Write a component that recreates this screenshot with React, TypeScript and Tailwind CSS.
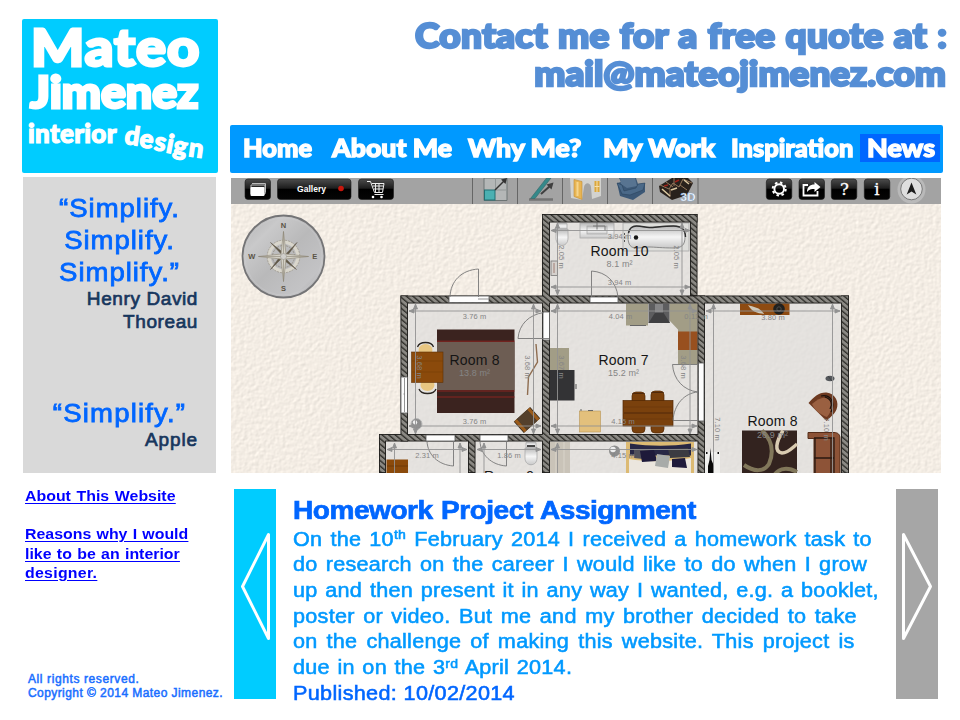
import React from "react";

const display = "font-['Lato','Open_Sans',sans-serif] font-black";
const justify = "[text-align-last:justify] whitespace-nowrap";

/* ---------- floor plan drawing ---------- */

type Rect = [number, number, number, number];

const walls: Rect[] = [
  [542, 214, 155.5, 8.5],
  [690, 214, 7.5, 82],
  [542, 214, 8, 259],
  [400.5, 295.5, 448.5, 8],
  [400.5, 295.5, 7.5, 146],
  [379, 434, 326, 7.5],
  [379, 434, 7, 39],
  [468, 434, 7.5, 39],
  [697.5, 295.5, 7.5, 178],
  [841, 295.5, 8, 178],
];

const floors: Rect[] = [
  [542, 214, 155, 82],
  [400, 296, 449, 138],
  [379, 434, 470, 40],
];

const openings: Rect[] = [
  [449, 296, 40, 6.5],
  [401, 377, 6.5, 36],
  [543, 312, 6.5, 28],
  [426, 435, 29, 6],
  [480, 435, 28, 6],
  [590, 297, 28, 5.5],
  [698.5, 363, 5.5, 58],
];

const hLines: Rect[] = [
  [409, 311, 541, 0],
  [409, 426, 541, 0],
  [551, 311, 697, 0],
  [551, 426, 697, 0],
  [551, 230.5, 690, 0],
  [551, 287, 690, 0],
  [706, 311, 840, 0],
  [387, 449.5, 467, 0],
  [477, 449.5, 541, 0],
  [551, 449.5, 697, 0],
];

const vLines: Rect[] = [
  [415.5, 304, 434, 0],
  [533.5, 304, 434, 0],
  [557.5, 223, 295, 0],
  [682, 223, 295, 0],
  [557.5, 304, 434, 0],
  [690, 304, 434, 0],
  [713.5, 304, 480, 0],
  [832.5, 304, 480, 0],
  [394.5, 443, 480, 0],
  [460, 443, 480, 0],
  [484, 443, 480, 0],
  [557.5, 443, 480, 0],
];

const dims: [string, number, number, number][] = [
  ["3.76 m", 474.5, 319, 0],
  ["3.76 m", 474.5, 424, 0],
  ["4.04 m", 620.5, 319, 0],
  ["4.15 m", 623, 424, 0],
  ["3.94 m", 619.5, 238.5, 0],
  ["3.94 m", 619.5, 285, 0],
  ["3.80 m", 773, 319.5, 0],
  ["2.31 m", 427, 457.5, 0],
  ["1.86 m", 509, 457.5, 0],
  ["4.15 m", 623, 457.5, 0],
  ["0.11 m", 696, 319, 0],
  ["2.05 m", 559, 257, 90],
  ["2.05 m", 673.5, 257, 90],
  ["3.68 m", 416.5, 367, 90],
  ["3.68 m", 525, 367, 90],
  ["3.67 m", 559, 367, 90],
  ["3.68 m", 681, 367, 90],
  ["7.10 m", 715, 429, 90],
  ["7.10 m", 824, 429, 90],
];

const rooms: [string, string, number, number][] = [
  ["Room 8", "13.8 m²", 474.5, 364.8],
  ["Room 7", "15.2 m²", 623.5, 364.8],
  ["Room 10", "8.1 m²", 619.5, 255.5],
  ["Room 8", "26.9 m²", 772.5, 426],
];

function Furniture() {
  return (
    <g>
      {/* bedroom rug */}
      <rect x="437" y="329.5" width="77.5" height="83.5" fill="#3b231f" />
      <rect x="437" y="342" width="77.5" height="48" fill="#6d5d53" />
      <path d="M437 341.2h77.5M437 391h77.5M437 397h77.5" stroke="#8a2520" strokeWidth="1" />
      {/* desk and chairs */}
      <g fill="#e8c681">
        <ellipse cx="425.500" cy="350" rx="7" ry="6" />
        <ellipse cx="427.500" cy="385" rx="7" ry="6" />
      </g>
      <path
        d="M417.500 347c2-6 14-6 16 0M419 389c2 6 15 6 17 0"
        fill="none"
        stroke="#2b2622"
        strokeWidth="1.300"
      />
      <rect x="411.500" y="352" width="31.500" height="30.500" fill="#8b4a0b" stroke="#5f3105" strokeWidth=".6" />
      <path d="M412 361h31M412 372h31" stroke="#753d08" strokeWidth=".6" />
      <circle cx="416.500" cy="424" r="5.500" fill="#8d8d8d" stroke="#b9b9b9" />
      <circle cx="415" cy="422.500" r="2.200" fill="#efefef" />
      <path d="M536 344l1.500 18-9 15-1 18" fill="none" stroke="#8f6d50" strokeWidth="1.400" />
      <g transform="rotate(-42 527 420)">
        <rect x="516" y="412.500" width="22" height="15" fill="#30271d" />
        <path d="M518.500 412.500v15M535.500 412.500v15" stroke="#9a5b1b" strokeWidth="3.500" />
        <rect x="520" y="412.500" width="14" height="15" fill="#54402c" />
      </g>
      {/* kitchen units */}
      <g fill="#a29d86">
        <rect x="550" y="348" width="19" height="23" />
        <rect x="626" y="303.500" width="22" height="22" />
        <path d="M669.500 303.500h28v61h-19.500v-35l-8.500-9z" />
      </g>
      <path d="M630 325.500h16" stroke="#666" />
      <rect x="550" y="370" width="24.500" height="30.500" fill="#333335" />
      <path d="M576 384v5" stroke="#555" />
      <rect x="648.500" y="303.500" width="21" height="19.500" fill="#5d5d5f" />
      <path d="M648.500 323l7-11h7.500l7 11z" fill="#3f3f41" />
      <path d="M655 303.500h8v9h-8z" fill="#858587" />
      <rect x="678" y="331.500" width="19.500" height="18.500" fill="#98501f" />
      <rect x="579.500" y="411" width="21" height="21" fill="#e3c07c" stroke="#b79455" strokeWidth=".6" />
      <path d="M580 410h2M588 410.500h5" stroke="#666" strokeWidth="1.200" />
      {/* dining set */}
      <g fill="#7a410d" stroke="#512704" strokeWidth=".7">
        <rect x="632" y="392" width="13" height="41" rx="4" />
        <rect x="651" y="391" width="13" height="42" rx="4" />
        <rect x="623" y="400.500" width="50" height="25.500" />
      </g>
      <path d="M624 413h49M632.500 393.500h12M651.500 392.500h12" stroke="#50290a" />
      <path d="M624 407h49M624 419h49" stroke="#68360b" strokeWidth=".6" />
      {/* bathroom fixtures */}
      <g stroke="#a9a9a9" strokeWidth=".8" fill="url(#porcelain)">
        <rect x="557" y="223" width="10" height="6" rx="1" />
        <path d="M556 229h12v9c0 10-12 10-12 0z" />
        <rect x="580" y="223" width="34" height="15" />
        <rect x="587" y="226" width="20" height="8" />
        <rect x="623" y="223" width="66" height="28" fill="#dededb" />
      </g>
      <path
        d="M628 237c0-8 3-11 8-11 6 0 8 1.500 13 1.500s14-1.500 24-1.500c9 0 12 3 12 11s-3 11-12 11c-10 0-19-1-24-1s-7 1-13 1c-5 0-8-3-8-11z"
        fill="url(#porcelain)"
        stroke="#777"
        strokeWidth=".8"
      />
      <path
        d="M628.500 233c1-5 4-7 8-7 6 0 8 1.500 13 1.500s14-1.500 24-1.500c8 0 12 3 12 11"
        fill="none"
        stroke="#2f2f2f"
        strokeWidth="1.400"
      />
      <circle cx="636" cy="237.500" r="2.200" fill="#161616" />
      <path d="M624.500 233v9" stroke="#555" strokeDasharray="2 1.500" />
      <path d="M597 222.500v7M593 226h12v5" fill="none" stroke="#777" />
      <rect x="551" y="261" width="6.500" height="14.500" fill="#d5d1cd" stroke="#777" strokeWidth=".8" />
      <path d="M554 263v10" stroke="#a17e74" />
      {/* living room */}
      <rect x="740" y="303.500" width="49.500" height="11.500" fill="#8e4b12" />
      <path d="M748 305c5 2 12 2 16 9-7-1-12-2-16-9z" fill="#cfc8b8" />
      <circle cx="779" cy="309" r="5.800" fill="#20201f" />
      <circle cx="779" cy="309" r="2.200" fill="none" stroke="#4c4b48" />
      <ellipse cx="830" cy="378.500" rx="4.500" ry="2.700" fill="#55585c" />
      <path d="M828 376l4 5" stroke="#3e4144" />
      <path d="M808.500 403c5-6 11-11 18-10.500 9 1 13 10 10 17-2 5-7 8-10 11.500z" fill="#6d3920" />
      <path d="M812 404c8-7 13-8 17-4s4 9-2 17c-6-2-12-6-15-13z" fill="#9a6041" />
      <path d="M821 396c9-2 15 6 10 16M825 397c6 2 8 7 5 12" fill="none" stroke="#1d120d" strokeWidth="1.200" />
      <path d="M808 432.500h26c4 0 6 2 6 6v35h-26v-35h-6z" fill="#8d5337" stroke="#552e1b" />
      <path d="M814 438h20v35M814 458h20M831 438v35M815 438v35" fill="none" stroke="#2a1911" strokeWidth="1.300" />
      <rect x="742" y="430.500" width="55" height="43" fill="#33231f" />
      <g fill="none">
        <path d="M762 430.500c10 9.500 12 21.500 7 33.500-5 8-15 8-25 1" stroke="#81775a" strokeWidth="4" />
        <path d="M783 430.500c-7 11.500-9 21.500-1 22.500 6 0 10-5 15-9" stroke="#d9cbb1" strokeWidth="3.500" />
        <path d="M775 474c5-6 13-7 22-2" stroke="#81775a" strokeWidth="4" />
      </g>
      <rect x="705" y="452" width="15" height="21" fill="#f0f0ee" />
      <path d="M710.500 448l1 12 2.500 6v7h-6v-7l1.500-6z" fill="#090909" />
      <path d="M706 453h1.500M717.500 453h1.500" stroke="#111" strokeWidth="2" />
      {/* lower rooms */}
      <rect x="386.500" y="459.500" width="21.500" height="14" fill="#8b4a0b" />
      <path d="M387 466h21" stroke="#6f3a08" />
      <g stroke="#a9a9a9" strokeWidth=".8" fill="url(#porcelain)">
        <rect x="526" y="442" width="10" height="6" rx="1" />
        <path d="M525 448h12v10c0 9-12 9-12 0z" />
      </g>
      <path d="M527 446h8" stroke="#111" strokeWidth="1.500" />
      <rect x="550" y="442" width="20" height="31" fill="#c9c3b8" />
      <path d="M556 442v31M564 442v31" stroke="#d9d4ca" />
      <circle cx="614.500" cy="451" r="5.500" fill="#8e8e8e" />
      <circle cx="613" cy="449.500" r="2.800" fill="#eee" />
      <rect x="626" y="442" width="68" height="31" fill="#dcba73" />
      <path d="M630 443.500c20 3 41 3 61 0v12h-61z" fill="#272745" />
      <path d="M629 459c17 3 42 3 62-1v15h-62z" fill="#ebe6de" />
      <path d="M634 449l20 2-2 9-18-2z" fill="#50505b" />
      <path d="M668 449l20-1 2 9-20 1z" fill="#3b3b42" />
      <path d="M640 451l14-1 3 11-15 1z" fill="#1e1a3a" />
      <path d="M657 454l13 2-2 12-13-2z" fill="#a8aba9" />
      <path d="M672 459l13-1 2 10-15-1z" fill="#1f1b3b" />
    </g>
  );
}

function Compass() {
  return (
    <g>
      <circle cx="283.500" cy="256.500" r="41" fill="url(#steel)" stroke="#747476" strokeWidth="1.800" />
      <circle cx="283.500" cy="256.500" r="38.500" fill="none" stroke="#d0d0d2" strokeWidth=".6" opacity=".6" />
      <circle cx="283.500" cy="256.500" r="14.500" fill="none" stroke="#d9d6cc" strokeWidth="3.500" />
      <circle cx="283.500" cy="256.500" r="16.300" fill="none" stroke="#8e887a" strokeWidth=".6" strokeDasharray="2 1" />
      <circle cx="283.500" cy="256.500" r="11" fill="none" stroke="#8e887a" strokeWidth=".8" strokeDasharray="2 1" />
      <path
        d="M283.500 256.500l-13-14 15 12zM283.500 256.500l13.500-14-11 15zM283.500 256.500l13 13-15-11zM283.500 256.500l-13 13 11-15z"
        fill="#5f5747"
        stroke="#5f5747"
        strokeWidth=".5"
      />
      <path
        d="M283.500 231.500l2.500 22.500 22.500 2.500-22.500 2.500-2.500 22.500-2.500-22.500-22.500-2.500 22.500-2.500z"
        fill="#d3d0c6"
        stroke="#969081"
        strokeWidth=".7"
      />
      <path d="M283.500 231.500v50M258.500 256.500h50" stroke="#8b8576" strokeWidth=".6" />
      <circle cx="283.500" cy="256.500" r="3" fill="#d0cfcb" stroke="#98958e" strokeWidth=".6" />
      <g
        className="font-['Liberation_Sans',sans-serif] font-bold"
        fontSize="7.500"
        fill="#5a5345"
        textAnchor="middle"
      >
        <text x="283.500" y="227.500">N</text>
        <text x="283.500" y="291">S</text>
        <text x="251.800" y="259">W</text>
        <text x="314.800" y="259">E</text>
      </g>
    </g>
  );
}

function BlackButton({ x, w }: { x: number; w: number }) {
  return (
    <rect x={x} y="179" width={w} height="20.500" rx="3" fill="url(#gloss)" stroke="#1b1b1b" strokeWidth=".6" />
  );
}

function Toolbar() {
  return (
    <g>
      <rect x="231" y="178" width="710" height="26" fill="#a3a3a3" />
      <path
        d="M472.500 178v26M517.500 178v26M562.500 178v26M607.500 178v26M652.500 178v26M698 178v26"
        stroke="#666"
        strokeWidth="1"
      />
      <BlackButton x={245} w={25.5} />
      <BlackButton x={277.500} w={73.5} />
      <BlackButton x={358.500} w={35} />
      <path d="M251 185h14v9h-14zM252 183.500h13.500v9" fill="none" stroke="#bbb" />
      <rect x="250.500" y="187" width="14" height="9" rx="1" fill="#fff" />
      <text
        x="297"
        y="191.800"
        textLength="29"
        className="font-['Liberation_Sans',sans-serif] font-bold"
        fontSize="8.500"
        fill="#fff"
      >
        Gallery
      </text>
      <circle cx="341" cy="188.500" r="2.800" fill="#c8170d" />
      <path
        d="M367 181.500h3.500l4 11h8l1.500-9h-12M374 189h9M373 186h10M375.500 183.500v9M379 183.500v9M374.500 194.500h9"
        fill="none"
        stroke="#eee"
        strokeWidth="1"
      />
      <circle cx="373" cy="197" r="1.300" fill="#fff" />
      <circle cx="381.500" cy="197" r="1.300" fill="#fff" />

      {/* tool icons */}
      <path d="M484 178h23v22.500h-23z" fill="#b4b7b7" stroke="#6d7474" />
      <path d="M495.500 178v12M495.500 190h11.500" stroke="#929797" />
      <rect x="484.500" y="190" width="10.500" height="10" fill="#4ab0b2" stroke="#226f72" />
      <path d="M495 190l10-10" stroke="#333" strokeWidth="1.500" />
      <path d="M507 178l-1.500 6-4.500-4.500z" fill="#333" />
      <path d="M529 199.500h24" stroke="#737373" strokeWidth="2.500" />
      <path d="M530.500 198.500l16-20.500h4.500l-16 20.500z" fill="#34898a" stroke="#356466" strokeWidth=".6" />
      <path d="M541 194l9-8" stroke="#3f3f3f" strokeWidth="2" />
      <path d="M553.500 182.500l-2 7-5-5z" fill="#3f3f3f" />
      <path d="M570 178h31v18l-9 3-1-12c-1-5-6-5-7 0l-2 13-11-2z" fill="#d2d2cf" />
      <path d="M574 179.500l8 2v18l-8-3z" fill="#e8b552" stroke="#c08c36" strokeWidth=".6" />
      <path d="M577.500 182v14" stroke="#f6d58c" strokeWidth="2" />
      <rect x="594.500" y="181" width="5" height="11" fill="#dca73b" />
      <path d="M597 181v11M594.500 186.500h5" stroke="#f5e0ac" />
      <path d="M619 178h17l2 6 7-1v9l-12 8-13-4-3-13 4-1z" fill="#3c5876" />
      <path d="M620 178h15l2 8-10 2-6-4z" fill="#587491" />
      <path d="M617 183l5 2 2 6 12-3 2-4 7-1-2 7-13 5-8-1z" fill="#4b6988" stroke="#294058" strokeWidth=".5" />
      <path d="M659 186l13-8h16l5 5-6 12-15 5-12-8z" fill="#28211c" />
      <path
        d="M660 185l9 4 4-6 6 4 4-8 9 4M666 182l7 5M674 178v8M670 189v8M680 185l7 5"
        fill="none"
        stroke="#92765a"
        strokeWidth="1"
      />
      <path d="M662 189l8 7M671 190l6-2M684 180l5 4" stroke="#dac7a0" strokeWidth="1.600" />
      <path d="M675 182l4-2M664 186l4-1" stroke="#9b2219" strokeWidth="1.500" />
      <text
        x="680.500"
        y="200.500"
        textLength="15"
        className="font-['Liberation_Sans',sans-serif] font-bold"
        fontSize="11.500"
        fill="#fff"
        stroke="#86a9d4"
        strokeWidth=".4"
      >
        3D
      </text>

      {/* right hand buttons */}
      <BlackButton x={766.300} w={25.5} />
      <BlackButton x={799} w={25.5} />
      <BlackButton x={831.300} w={25.5} />
      <BlackButton x={864.300} w={25.5} />
      <circle cx="779.200" cy="189" r="4.800" fill="none" stroke="#fff" strokeWidth="2" />
      <circle cx="779.200" cy="189" r="6.500" fill="none" stroke="#fff" strokeWidth="2" strokeDasharray="2.500 2.600" />
      <path d="M808 185h-4.500v10.500h14V191" fill="none" stroke="#fff" strokeWidth="1.800" />
      <path d="M807 192c0-5 3-7.500 7.500-7.500V182l6 5-6 5v-3c-3.500 0-5.500.5-7.500 3z" fill="#fff" />
      <g className="font-['DejaVu_Serif',serif]" fill="#fff" stroke="#fff" strokeWidth=".3" fontSize="16.500" textAnchor="middle">
        <text x="844.500" y="195">?</text>
        <text x="877" y="195">i</text>
      </g>
      <circle cx="911.500" cy="189.500" r="14" fill="#b9b9b9" />
      <circle cx="911.500" cy="189" r="10.800" fill="#dedede" stroke="#777" strokeWidth="1" />
      <path d="M911.500 182.500l4.800 12-4.800-3-4.800 3z" fill="#1c1c1c" />
    </g>
  );
}

function FloorPlan() {
  return (
    <svg viewBox="231 178 710 295" className="block h-[295px] w-[710px]">
      <defs>
        <pattern id="hatch" width="4.200" height="4.200" patternUnits="userSpaceOnUse" patternTransform="rotate(-50)">
          <rect width="4.200" height="4.200" fill="#8b8984" />
          <path d="M.7 0v4.200" stroke="#24231f" strokeWidth="1.200" />
        </pattern>
        <linearGradient id="gloss" x1="0" y1="0" x2="0" y2="1">
          <stop offset="0" stopColor="#4c4c4c" />
          <stop offset=".45" stopColor="#1d1d1d" />
          <stop offset=".5" stopColor="#000" />
          <stop offset="1" stopColor="#050505" />
        </linearGradient>
        <linearGradient id="steel" x1="0" y1="0" x2="1" y2="1">
          <stop offset="0" stopColor="#b0b0b1" />
          <stop offset=".25" stopColor="#c9c9ca" />
          <stop offset=".5" stopColor="#b9b9ba" />
          <stop offset=".8" stopColor="#c3c3c5" />
          <stop offset="1" stopColor="#99999b" />
        </linearGradient>
        <linearGradient id="porcelain" x1="0" y1="0" x2="0" y2="1">
          <stop offset="0" stopColor="#b8b8b8" />
          <stop offset=".5" stopColor="#f5f5f5" />
          <stop offset="1" stopColor="#c9c9c9" />
        </linearGradient>
        <filter id="paper" x="0" y="0" width="100%" height="100%" colorInterpolationFilters="sRGB">
          <feTurbulence type="fractalNoise" baseFrequency="0.26" numOctaves="2" seed="4" result="n" />
          <feDiffuseLighting in="n" lightingColor="#fff8ef" surfaceScale="0.19" diffuseConstant="1.165">
            <feDistantLight azimuth="225" elevation="55" />
          </feDiffuseLighting>
        </filter>
      </defs>

      <rect x="231" y="178" width="710" height="295" fill="#f3ede3" filter="url(#paper)" />
      {floors.map(([x, y, w, h], i) => (
        <rect key={i} x={x} y={y} width={w} height={h} fill="#dfdedc" opacity=".75" />
      ))}

      <Furniture />

      {walls.map(([x, y, w, h], i) => (
        <rect key={i} x={x} y={y} width={w} height={h} fill="#1e1d1b" />
      ))}
      {walls.map(([x, y, w, h], i) => (
        <rect key={i} x={x + 0.9} y={y + 0.9} width={w - 1.8} height={h - 1.8} fill="url(#hatch)" />
      ))}
      {openings.map(([x, y, w, h], i) => (
        <rect key={i} x={x} y={y} width={w} height={h} fill="#fdfdfd" stroke="#555" strokeWidth=".8" />
      ))}
      <path d="M404.500 378v34M478 299h11M403.500 394h1" stroke="#777" strokeWidth=".8" />

      <g fill="none" stroke="#777" strokeWidth=".9">
        <path d="M478.500 297v-28c-17 1-28 12-28.500 28" />
        <path d="M549 338.500h-31c1-14 11-24 26-26" />
        <path d="M453.500 441v25c-15-1-26-11-26.500-25" />
        <path d="M506.500 441v25c-15-1-26-11-26.500-25" />
        <path d="M591.500 297v-26c15 1 25 11 26.500 26" />
        <path d="M698 364.500h-25.500c1 15 11 26 25.500 27.500-14 1-24 13-25 28.500h25" />
      </g>

      <g stroke="#929292" strokeWidth=".9" fill="#929292">
        {hLines.map(([x1, y, x2], i) => (
          <path key={i} d={`M${x1} ${y}H${x2}M${x1} ${y}l5-2v4zM${x2} ${y}l-5-2v4z`} />
        ))}
        {vLines.map(([x, y1, y2], i) => (
          <path key={i} d={`M${x} ${y1}V${y2}M${x} ${y1}l-2 5h4zM${x} ${y2}l-2-5h4z`} />
        ))}
      </g>

      <g className="font-['Liberation_Sans',sans-serif]" fontSize="7.500" fill="#858585" textAnchor="middle">
        {dims.map(([t, x, y, r], i) => (
          <text key={i} x={x} y={y} textLength="23.500" transform={r ? `rotate(${r} ${x} ${y})` : undefined}>
            {t}
          </text>
        ))}
      </g>
      <g className="font-['Liberation_Sans',sans-serif]" textAnchor="middle">
        {rooms.map(([name, area, x, y], i) => (
          <React.Fragment key={i}>
            <text x={x} y={y} fontSize="14" textLength={name.length > 6 ? 58 : 50} fill="#151515">
              {name}
            </text>
            <text x={x} y={y + 11.5} fontSize="9" textLength={area.length > 6 ? 31 : 26} fill="#858585">
              {area}
            </text>
          </React.Fragment>
        ))}
        <text x="509" y="481" fontSize="14" textLength="50" fill="#151515">
          Room 9
        </text>
      </g>

      <Compass />
      <Toolbar />
    </svg>
  );
}

/* ---------- page ---------- */

const design: [string, string][] = [
  ["d", "translate-y-[-6px] rotate-[8deg]"],
  ["e", "translate-y-[-3px] rotate-[9deg]"],
  ["s", "translate-y-[0px] rotate-[10deg]"],
  ["i", "translate-y-[2px] rotate-[11deg]"],
  ["g", "translate-y-[4px] rotate-[10deg]"],
  ["n", "translate-y-[6px] rotate-[8deg]"],
];

function Logo() {
  return (
    <div
      className={`${display} h-[154px] w-[196px] rounded-[2px] bg-[#00ccff] whitespace-nowrap text-white [-webkit-text-stroke:2.800px_white]`}
    >
      <div className="ml-[9px] h-[53px] w-[150px] origin-left scale-x-[1.100] text-[51px] leading-[55px] tracking-[0.900px]">
        Mateo
      </div>
      <div className="ml-[8px] h-[46px] w-[150px] origin-left scale-x-[1.080] text-[43px] leading-[39px]">Jimenez</div>
      <div className="flex pl-[6px] text-[26px] leading-[30px] [-webkit-text-stroke:1.200px_white]">
        <span className="w-[97px] tracking-[0.300px]">interior</span>
        <span className="flex gap-[0.600px] pt-[8px]">
          {design.map(([ch, cls]) => (
            <span key={ch} className={`inline-block ${cls}`}>
              {ch}
            </span>
          ))}
        </span>
      </div>
    </div>
  );
}

const nav: [string, string, string][] = [
  ["Home", "ml-[13px] w-[89px]", "scale-x-[1.060]"],
  ["About Me", "w-[136px]", "scale-x-[1.110]"],
  ["Why Me?", "w-[135px]", "scale-x-[1.110]"],
  ["My Work", "w-[128px]", "scale-x-[1.120]"],
  ["Inspiration", "w-[129px]", "scale-x-[1.060]"],
];

function Nav() {
  return (
    <nav
      className={`${display} flex h-[48px] w-[713px] items-center rounded-[2px] bg-[#0099ff] pb-[2px] text-[24px] whitespace-nowrap text-white [-webkit-text-stroke:1.300px_white]`}
    >
      {nav.map(([label, box, stretch]) => (
        <a key={label} className={box}>
          <span className={`inline-block origin-left ${stretch}`}>{label}</span>
        </a>
      ))}
      <a className="h-[28px] w-[80px] bg-[#0066ff] pl-[7px] leading-[27px]">
        <span className="inline-block origin-left scale-x-[1.120]">News</span>
      </a>
    </nav>
  );
}

function Article() {
  return (
    <article className="ml-[17px] w-[603px] pt-[8px] text-[20px] leading-[25.700px] text-[#0099ff] [-webkit-text-stroke:0.550px_#0099ff]">
      <h1
        className={`${justify} h-[29.500px] w-[373px] origin-left scale-x-[1.080] text-[26px] leading-[26px] font-bold tracking-[-0.450px] text-[#0066ff] [-webkit-text-stroke:0.700px_#0066ff]`}
      >
        Homework Project Assignment
      </h1>
      <div className="w-[543px] origin-left scale-x-[1.080] tracking-[0.250px]">
        <p className={`${justify} w-[536px]`}>
          On the 10<sup className="text-[13px] leading-none">th</sup> February 2014 I received a homework task to
        </p>
        <p className={`${justify} w-[531.500px]`}>do research on the career I would like to do when I grow</p>
        <p className={`${justify} w-[542.500px]`}>up and then present it in any way I wanted, e.g. a booklet,</p>
        <p className={`${justify} w-[522px]`}>poster or video. But me and my brother decided to take</p>
        <p className={`${justify} w-[520px]`}>on the challenge of making this website. This project is</p>
        <p className={`${justify} w-[258.500px]`}>
          due in on the 3<sup className="text-[13px] leading-none">rd</sup> April 2014.
        </p>
        <p className={`${justify} w-[205.500px] tracking-[0.300px] text-[#0066ff] [-webkit-text-stroke:0.550px_#0066ff]`}>
          Published: 10/02/2014
        </p>
      </div>
    </article>
  );
}

export default function App() {
  return (
    <div className="flex h-[720px] w-[960px] overflow-hidden bg-white font-['Liberation_Sans',Arial,sans-serif]">
      <aside className="ml-[22px] flex w-[208px] shrink-0 flex-col pt-[19px]">
        <Logo />
        <section className="mt-[4px] ml-px h-[296px] w-[193px] bg-[#d9d9d9] pt-[15px] whitespace-nowrap text-[#0066ff]">
          <div className="scale-x-[1.060] text-center text-[26px] leading-[32px] tracking-[0.900px] [-webkit-text-stroke:0.800px_#0066ff]">
            <div>“Simplify.</div>
            <div>Simplify.</div>
            <div>Simplify.”</div>
          </div>
          <div className="pr-[18px] text-right text-[19px] leading-[23px] tracking-[0.600px] text-[#17365d] [-webkit-text-stroke:0.700px_#17365d]">
            <div className="-mt-px">Henry David</div>
            <div>Thoreau</div>
          </div>
          <div className="mt-[64px] scale-x-[1.060] text-center text-[26px] leading-[32px] tracking-[1.100px] [-webkit-text-stroke:0.800px_#0066ff]">
            “Simplify.”
          </div>
          <div className="pr-[18px] text-right text-[19px] leading-[21px] tracking-[0.900px] text-[#17365d] [-webkit-text-stroke:0.700px_#17365d]">
            Apple
          </div>
        </section>
        <section className="mt-[13px] ml-[3px] w-[170px] origin-left scale-x-[1.060] text-[15px] leading-[19.300px] font-bold text-[#0000ff] underline underline-offset-2">
          <a className={`${justify} block w-[142px]`}>About This Website</a>
          <a className={`${justify} mt-[19px] block w-[154px]`}>Reasons why I would</a>
          <a className={`${justify} block w-[146px]`}>like to be an interior</a>
          <a className="block tracking-[0.250px]">designer.</a>
        </section>
        <footer className="mt-[90px] ml-[6px] text-[12px] leading-[14px] text-[#1a6fff] [-webkit-text-stroke:0.500px_#1a6fff]">
          <p className={`${justify} w-[111px] tracking-[0.600px]`}>All rights reserved.</p>
          <p className={`${justify} w-[195px] tracking-[0.420px]`}>Copyright © 2014 Mateo Jimenez.</p>
        </footer>
      </aside>

      <main className="flex w-[730px] shrink-0 flex-col">
        <header
          className={`${display} h-[125px] pt-[15px] text-[35px] leading-[38px] text-[#558ed5] [-webkit-text-stroke:2.400px_#558ed5]`}
        >
          <div className={`${justify} ml-[185px] w-[502px] origin-left scale-x-[1.060] tracking-[0.200px]`}>
            Contact me for a free quote at :
          </div>
          <div className="w-[716px] origin-right scale-x-[1.055] text-right whitespace-nowrap">mail@mateojimenez.com</div>
        </header>
        <Nav />
        <div className="mt-[5px] ml-px">
          <FloorPlan />
        </div>
        <div className="mt-[16px] ml-[4px] flex h-[210px]">
          <button className="h-[210px] w-[42px] shrink-0 bg-[#00ccff]">
            <svg viewBox="0 0 42 210" className="block h-[210px] w-[42px]">
              <path d="M34.500 45.500v104L8.500 97.500z" fill="none" stroke="#fff" strokeWidth="3" strokeLinejoin="round" />
            </svg>
          </button>
          <Article />
          <button className="h-[210px] w-[42px] shrink-0 bg-[#a6a6a6]">
            <svg viewBox="0 0 42 210" className="block h-[210px] w-[42px]">
              <path d="M7.500 45.500v104l27-52z" fill="none" stroke="#fff" strokeWidth="3" strokeLinejoin="round" />
            </svg>
          </button>
        </div>
      </main>
    </div>
  );
}
